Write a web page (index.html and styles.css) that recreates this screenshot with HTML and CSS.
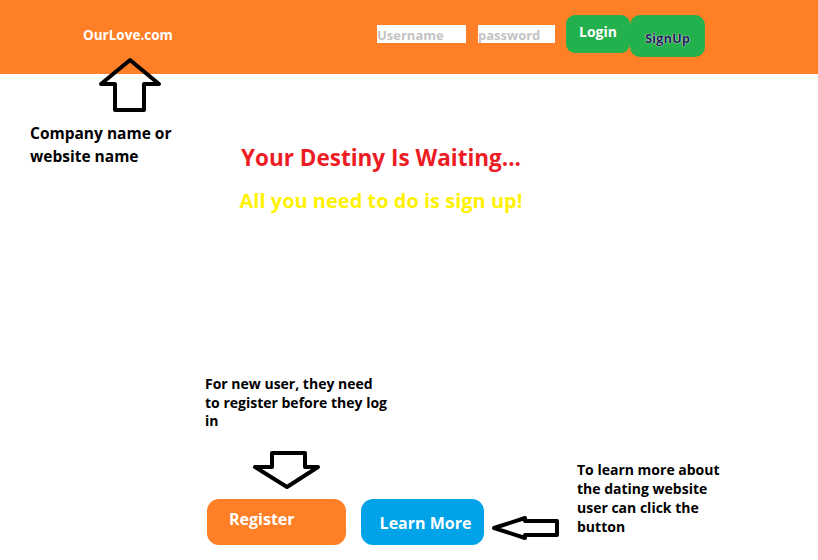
FILE: index.html
```html
<!DOCTYPE html>
<html lang="en">
<head>
<meta charset="utf-8">
<title>OurLove.com</title>
<link rel="stylesheet" href="styles.css">
</head>
<body>
<div class="page">
  <header class="topbar">
    <div class="logo">OurLove.com</div>
    <div class="auth">
      <input class="field field-user" type="text" placeholder="Username">
      <input class="field field-pass" type="password" placeholder="password">
      <button class="btn-login">Login</button>
      <button class="btn-signup">SignUp</button>
    </div>
  </header>

  <main class="hero">
    <h1 class="title">Your Destiny Is Waiting...</h1>
    <p class="subtitle">All you need to do is sign up!</p>
  </main>

  <div class="actions">
    <button class="btn-register">Register</button>
    <button class="btn-learn">Learn More</button>
  </div>

  <p class="note note-company">Company name or<br>website name</p>
  <p class="note note-register">For new user, they need<br>to register before they log<br>in</p>
  <p class="note note-learn">To learn more about<br>the dating website<br>user can click the<br>button</p>

  <svg class="arrows" width="818" height="560" viewBox="0 0 818 560" aria-hidden="true">
    <polygon points="130,60 159,84 144,84 144,110 115,110 115,84 101,84"/>
    <polygon points="272,453 305,453 305,467 318,467 287,487 255,467 272,467"/>
    <polygon points="494,528 525,518 525,521 557,521 557,535 525,535 525,538"/>
  </svg>
</div>
</body>
</html>
```

FILE: styles.css
```css
html, body {
  margin: 0;
  padding: 0;
  background: #ffffff;
}

body {
  font-family: "Open Sans", "Liberation Sans", sans-serif;
  font-weight: 700;
}

.page {
  position: relative;
  width: 818px;
  height: 560px;
  overflow: hidden;
}

.topbar {
  display: flex;
  align-items: flex-start;
  height: 74px;
  background: #ff7f27;
  padding-left: 83px;
  box-sizing: border-box;
}

.logo {
  width: 294px;
  flex-shrink: 0;
  margin-top: 27px;
  color: #ffffff;
  font-size: 13.5px;
  line-height: 1.2;
}

.auth {
  display: flex;
  align-items: flex-start;
}

.field {
  box-sizing: border-box;
  height: 18px;
  margin-top: 25px;
  border: 0;
  padding: 1px 0 0 0;
  background: #ffffff;
  font-family: "Open Sans", "Liberation Sans", sans-serif;
  font-weight: 700;
  font-size: 13px;
  color: #444;
  outline: none;
}

.field::placeholder {
  color: #c3c3c3;
  opacity: 1;
}

.field-user {
  width: 89px;
}

.field-pass {
  width: 77px;
  margin-left: 12px;
}

button {
  font-family: "Open Sans", "Liberation Sans", sans-serif;
  font-weight: 700;
  border: 0;
  padding: 0;
  cursor: pointer;
}

.btn-login {
  width: 64px;
  height: 38px;
  margin-top: 15px;
  margin-left: 11px;
  background: #22b14c;
  border-radius: 9px;
  color: #ffffff;
  font-size: 14px;
  line-height: 1;
  padding-bottom: 5px;
}

.btn-signup {
  width: 75px;
  height: 42px;
  margin-top: 15px;
  background: #22b14c;
  border-radius: 10px;
  color: #1a1a50;
  font-size: 13px;
  line-height: 1;
  padding-top: 5px;
  text-shadow: 0 0 1px #ffffff, 0 0 1px #ffffff;
}

.hero {
  display: block;
  width: 340px;
  margin-left: 211px;
  text-align: center;
}

.title {
  margin: 71px 0 0;
  color: #ed1c24;
  font-size: 22.5px;
  line-height: 26px;
  font-weight: 700;
}

.subtitle {
  margin: 17px 0 0;
  color: #fff200;
  font-size: 20px;
  line-height: 25px;
}

.actions {
  display: flex;
  align-items: flex-start;
  gap: 15px;
  margin-top: 286px;
  margin-left: 207px;
}

.btn-register {
  width: 139px;
  height: 46px;
  background: #ff7f27;
  border-radius: 12px;
  color: #ffffff;
  font-size: 16px;
  line-height: 1;
  text-align: left;
  padding: 0 0 6px 22px;
}

.btn-learn {
  width: 123px;
  height: 46px;
  background: #00a2e8;
  border-radius: 12px;
  color: #ffffff;
  font-size: 16px;
  line-height: 1;
  padding: 2px 0 0 6px;
}

.note {
  position: absolute;
  margin: 0;
  color: #000000;
}

.note-company {
  left: 30px;
  top: 122px;
  font-size: 15.5px;
  line-height: 23px;
}

.note-register {
  left: 205px;
  top: 375px;
  font-size: 14px;
  line-height: 18.5px;
}

.note-learn {
  left: 577px;
  top: 460px;
  font-size: 14px;
  line-height: 19px;
}

.arrows {
  position: absolute;
  left: 0;
  top: 0;
  pointer-events: none;
}

.arrows polygon {
  fill: none;
  stroke: #000000;
  stroke-width: 4;
  stroke-linejoin: round;
}
```
